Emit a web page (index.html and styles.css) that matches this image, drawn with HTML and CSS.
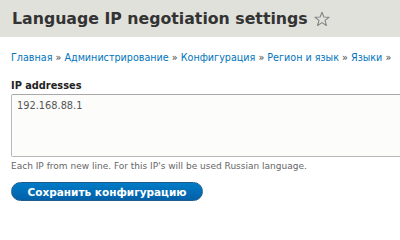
FILE: index.html
```html
<!DOCTYPE html>
<html>
<head>
<meta charset="utf-8">
<link rel="stylesheet" href="styles.css">
</head>
<body>
<header class="head">
  <h1 class="title">Language IP negotiation settings <span class="star"><svg width="16" height="16" viewBox="0 0 16 16"><polygon points="8,1.2 9.9,6 15,6.2 11,9.4 12.4,14.5 8,11.6 3.6,14.5 5,9.4 1,6.2 6.1,6" fill="none" stroke="#868686" stroke-width="1.1" stroke-linejoin="round"/></svg></span></h1>
</header>
<main class="content">
  <nav class="crumbs"><a href="#">Главная</a> » <a href="#">Администрирование</a> » <a href="#">Конфигурация</a> » <a href="#">Регион и язык</a> » <a href="#">Языки</a> »</nav>
  <form class="form">
    <label class="label">IP addresses</label>
    <div class="textarea">192.168.88.1</div>
    <p class="desc">Each IP from new line. For this IP's will be used Russian language.</p>
    <button class="btn" type="button">Сохранить конфигурацию</button>
  </form>
</main>
</body>
</html>
```
FILE: styles.css
```css
html, body { margin: 0; padding: 0; background: #fff; }
body { font-family: "DejaVu Sans", sans-serif; color: #333; width: 400px; height: 208px; overflow: hidden; }
.head { background: #e1e1dc; height: 37px; padding: 0 11px 0 12px; box-sizing: border-box; display: flex; align-items: center; }
.title { margin: 0; font-size: 15.75px; font-weight: bold; color: #333; white-space: nowrap; display: flex; align-items: center; gap: 6px; }
.star { display: inline-flex; }
.content { padding: 0 11px; }
.crumbs { font-size: 9.6px; margin-top: 15px; white-space: nowrap; color: #444; }
.crumbs a { color: #0074bd; text-decoration: none; }
.form { margin-top: 17px; }
.label { display: block; font-size: 9.8px; font-weight: bold; color: #222; }
.textarea { margin-top: 3px; width: 420px; height: 63px; border: 1px solid #b8b8b8; border-top-color: #a8a8a8; border-radius: 2px; background: #fcfcfa; font-size: 9.8px; color: #555; padding: 5px 5px; box-sizing: border-box; }
.desc { margin: 4px 0 0; font-size: 9px; color: #666; }
.btn { margin-top: 11px; width: 192px; height: 19px; border: 1px solid #1e5c90; border-radius: 10px; background: linear-gradient(#007bc6, #0360a8); color: #fff; font-family: "DejaVu Sans", sans-serif; font-weight: bold; font-size: 10.5px; padding: 0; }
```
